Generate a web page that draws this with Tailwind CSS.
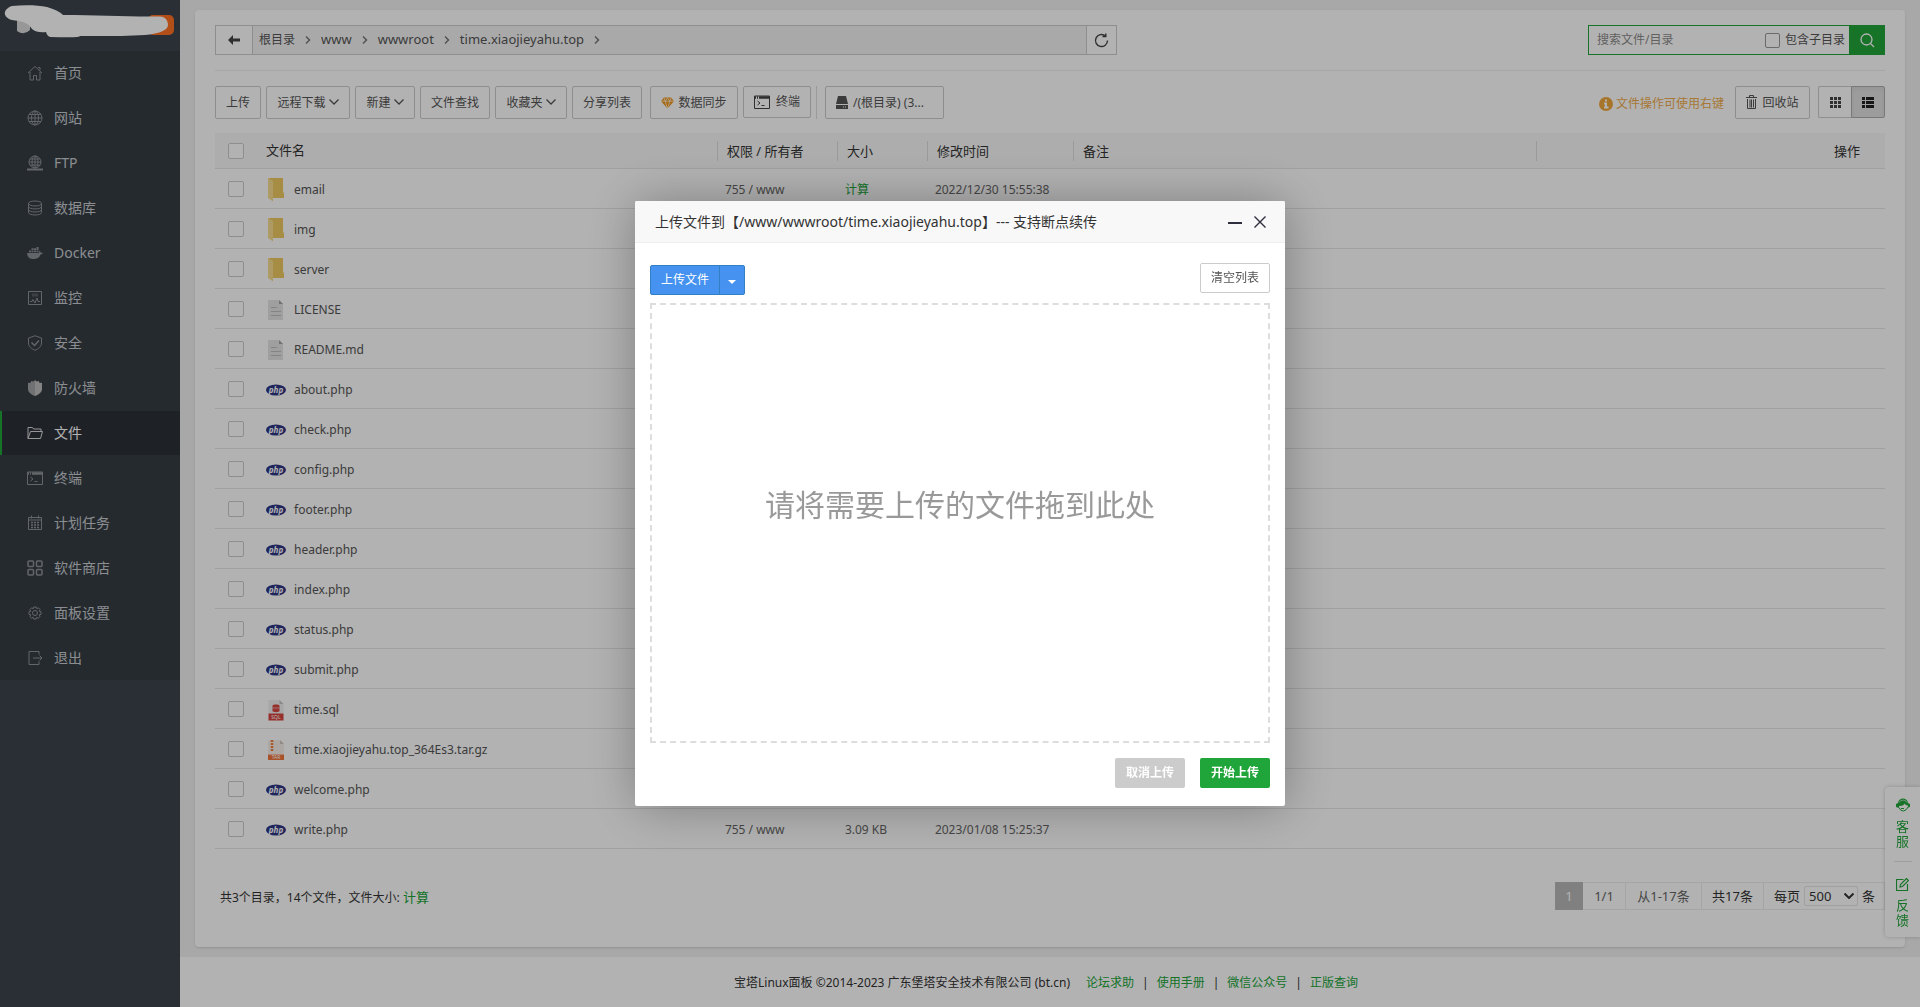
<!DOCTYPE html>
<html lang="zh-CN">
<head>
<meta charset="utf-8">
<title>宝塔Linux面板</title>
<script src="https://cdn.jsdelivr.net/npm/@tailwindcss/browser@4"></script>
</head>
<body class="min-h-screen bg-[#f1f1f1] font-['Noto_Sans','Noto_Sans_CJK_SC',sans-serif] text-xs text-[#333]">
<svg class="hidden" aria-hidden="true">
  <symbol id="i-home" viewBox="0 0 16 16"><path d="M1 8 8 1.500 15 8M3 7v8h3.500v-4.500h3V15H13V7M11 2.500h2V5"/></symbol>
  <symbol id="i-globe" viewBox="0 0 16 16"><circle cx="8" cy="8" r="7"/><ellipse cx="8" cy="8" rx="3.500" ry="7"/><path d="M8 1v14M1 8h14M2 4.500h12M2 11.500h12"/></symbol>
  <symbol id="i-ftp" viewBox="0 0 16 16"><circle cx="8" cy="7" r="6"/><ellipse cx="8" cy="7" rx="3" ry="6"/><path d="M8 1v12M2 7h12M3 4h10M3 10h10"/><path d="M0 14.500h16M6 14.500h4" stroke-width="2"/></symbol>
  <symbol id="i-db" viewBox="0 0 16 16"><ellipse cx="8" cy="3.500" rx="6.500" ry="2.500"/><path d="M1.500 3.500v9c0 3.300 13 3.300 13 0v-9M1.500 6.500c0 3.300 13 3.300 13 0M1.500 9.500c0 3.300 13 3.300 13 0"/></symbol>
  <symbol id="i-docker" viewBox="0 0 16 16"><path fill="currentColor" stroke="none" d="M0 8h11.500c.8-.3 1-1 .7-2.500l1 .8.4 1.200L16 8c-.4 1-1.300 1.200-2.200 1.200C12.500 12.500 10 14 6.500 14 3 14 .3 12.500 0 8zM2 5.500h2v1.800H2zM4.500 5.500h2v1.800h-2zM7 5.500h2v1.800H7zM9.500 5.500h2v1.800h-2zM4.500 3.200h2V5h-2zM7 3.200h2V5H7zM9.500 2h2v3h-2z"/></symbol>
  <symbol id="i-monitor" viewBox="0 0 16 16"><path d="M1.500 1.500h13v13h-13zM3 11.500h2l1-2 2 3.500 2-5 1 3.500h2"/><path fill="currentColor" fill-opacity=".4" stroke="none" d="M5 3.500h6v3H5z"/></symbol>
  <symbol id="i-shield" viewBox="0 0 16 16"><path d="M8 .8 14.500 3v5c0 3.500-3 5.800-6.500 7.300C4.500 13.800 1.500 11.500 1.500 8V3z"/><path stroke-width="1.500" d="M4.500 7.500l3 3L12 5.500"/></symbol>
  <symbol id="i-wall" viewBox="0 0 16 16"><path fill="currentColor" stroke="none" d="M8 0 9.500 1.500 12 1v1.500L15 3v6c0 3-3 5.500-7 7z"/><path fill="currentColor" fill-opacity=".8" stroke="none" d="M8 0 6.500 1.500 4 1v1.500L1 3v6c0 3 3 5.500 7 7z"/></symbol>
  <symbol id="i-folder" viewBox="0 0 16 16"><path d="M1 13.500V2.500h4.500l1 1.500H14v2.500M1 13.500 3.500 6.500h12l-2 7z"/></symbol>
  <symbol id="i-term" viewBox="0 0 16 16"><path d="M.5 2h15v12.500H.5zM3.500 7l2.500 2-2.500 2M7.500 11.500h3"/><path d="M1 3.500h14" stroke-width="2.500" stroke-dasharray="1 1 1 1 11"/></symbol>
  <symbol id="i-cal" viewBox="0 0 16 16"><path d="M1.500 2.500h13v12h-13zM4.500 .5v3M11.500 .5v3M1.500 5h13"/><path d="M4 7.500h8M4 10h8M4 12.500h8" stroke-dasharray="2 1" stroke-width="1.500"/></symbol>
  <symbol id="i-apps" viewBox="0 0 16 16"><g stroke-width="1.500"><rect x="1" y="1" width="5.500" height="5.500" rx="1"/><rect x="9.500" y="1" width="5.500" height="5.500" rx="1"/><rect x="1" y="9.500" width="5.500" height="5.500" rx="1"/><rect x="9.500" y="9.500" width="5.500" height="5.500" rx="1"/></g></symbol>
  <symbol id="i-gear" viewBox="0 0 16 16"><circle cx="8" cy="8" r="2.500"/><path d="M6.800 1.500h2.400l.5 1.700 1.700-.9 1.700 1.700-.9 1.700 1.800.5v2.600l-1.800.5.9 1.700-1.700 1.700-1.700-.9-.5 1.800H6.800l-.5-1.800-1.700.9-1.700-1.700.9-1.700L2 8.800V6.200l1.800-.5-.9-1.700 1.700-1.700 1.700.9z" transform="translate(0 .5)"/></symbol>
  <symbol id="i-exit" viewBox="0 0 16 16"><path d="M12 4.500v-3H2v13h10v-3M6 8h9M12.500 5.500 15 8l-2.500 2.500"/></symbol>
  <symbol id="i-down" viewBox="0 0 10 6"><path d="M.5 .5 5 5 9.500 .5"/></symbol>
  <symbol id="i-right" viewBox="0 0 6 8"><path d="M1 .5 4.500 4 1 7.500" stroke-width="1.500"/></symbol>
  <symbol id="f-dir" viewBox="0 0 20 24"><path fill="#eecb60" d="M2 0h15v13l1 3v4H2z"/><path fill="#f8dd90" d="M2 0 7 3v20.500L2 20z"/></symbol>
  <symbol id="f-txt" viewBox="0 0 20 24"><path fill="#e4e4e4" d="M2 2h11l4 4v16H2z"/><path fill="#a3a3a3" d="M13 2l4 4h-4z"/><path stroke="#bdbdbd" d="M5 9.500h6M5 13.500h10M5 17.500h10"/></symbol>
  <symbol id="f-php" viewBox="0 0 20 24"><ellipse cx="10" cy="12" rx="10" ry="5.500" fill="#2e3585"/><text x="10" y="14.500" text-anchor="middle" font-size="8" font-style="italic" font-weight="700" fill="#fff">php</text></symbol>
  <symbol id="f-sql" viewBox="0 0 20 24"><path fill="#efefef" d="M2.500 2h11l4 4v10h-15z"/><path fill="#c4c4c4" d="M13.500 2l4 4h-4z"/><path fill="#d84540" d="M6.500 7.500c0-1.500 7-1.500 7 0v5.500c0 1.500-7 1.500-7 0zM2.500 15.500h15v7h-15z"/><path stroke="#efefef" stroke-width=".6" d="M6.500 10h7"/><text x="10" y="21" text-anchor="middle" font-size="5" fill="#fff">SQL</text></symbol>
  <symbol id="f-tar" viewBox="0 0 20 24"><path fill="#f6efe9" d="M2 2h12l4 4v10H2z"/><path fill="#cfc8c0" d="M14 2l4 4h-4z"/><path stroke="#f08040" stroke-width="2.500" stroke-dasharray="2 1" d="M6 2v11"/><path fill="#f2763c" d="M2 16.500h16v5.500H2z"/><text x="10" y="21" text-anchor="middle" font-size="5" fill="#fff">TAR</text></symbol>
</svg>

<div class="flex min-h-screen">
  <aside class="w-[180px] shrink-0 bg-[#3c444d]">
    <div class="h-[51px]">
      <svg class="block h-[51px] w-[180px]" viewBox="0 0 180 51" role="img" aria-label="logo">
        <rect x="148" y="15" width="26" height="20" rx="5" fill="#ff7124"/>
        <path fill="#d9d9d9" d="M17 20h13v10q-6 6-13 1z"/>
        <path stroke="#9cc9ea" stroke-width="2" d="M80 17h40"/>
        <path fill="#fff" d="M12 6C24 4.500 38 5 47 7q11 3 16 8c35 0 65 2 97 1.500 5 0 8 4 8 8.500 0 5-8 8-18 9.500-20 2-50 1.500-70 1.500q1 2-30 1-3-1-4-5-9 1-14-3C28 22 20 21 12 20 2 17 3 9 12 6z"/>
      </svg>
    </div>
    <nav id="menu" class="flex flex-col gap-px bg-[#353d44] text-sm text-[#c8cbd0]"></nav>
  </aside>

  <div class="flex min-w-0 grow flex-col">
    <main class="mx-[15px] mt-[10px] grow rounded bg-white px-5 pt-[15px] shadow-sm">
      <div class="flex h-[30px] items-stretch justify-between">
        <div class="flex w-[54%] border border-[#ccc] bg-[#f3f3f3] text-[#555]">
          <button class="flex w-[37px] items-center justify-center border-r border-[#ccc] bg-white" aria-label="返回">
            <svg class="h-[10px] w-3" viewBox="0 0 12 10"><path fill="#444" d="M5 0v3.500h7v3H5V10L0 5z"/></svg>
          </button>
          <div class="flex grow items-center gap-[10px] pl-[6px] text-[13px]">
            <a href="#" class="text-xs">根目录</a><svg class="h-2 w-[6px] fill-none stroke-[#777]"><use href="#i-right"/></svg>
            <a href="#">www</a><svg class="h-2 w-[6px] fill-none stroke-[#777]"><use href="#i-right"/></svg>
            <a href="#">wwwroot</a><svg class="h-2 w-[6px] fill-none stroke-[#777]"><use href="#i-right"/></svg>
            <a href="#">time.xiaojieyahu.top</a><svg class="h-2 w-[6px] fill-none stroke-[#777]"><use href="#i-right"/></svg>
          </div>
          <button class="flex w-[30px] items-center justify-center border-l border-[#ccc] bg-white" aria-label="刷新">
            <svg class="h-[15px] w-[15px]" viewBox="0 0 15 15" fill="none" stroke="#444" stroke-width="1.400"><path d="M13.500 7.500a6 6 0 1 1-2.200-4.600M11.800 .5v3h-3.300"/></svg>
          </button>
        </div>
        <form class="flex w-[297px]">
          <div class="flex min-w-0 grow items-center border border-r-0 border-[#20a53a] pr-1">
            <input type="text" aria-label="搜索文件/目录" placeholder="搜索文件/目录" class="min-w-0 grow pl-2 text-xs outline-none placeholder:text-[#8c8c8c]">
            <label class="flex shrink-0 items-center gap-[5px] whitespace-nowrap text-[#555]"><input type="checkbox" class="h-[15px] w-[15px] appearance-none rounded-xs border border-[#999]">包含子目录</label>
          </div>
          <button type="button" class="flex w-9 shrink-0 items-center justify-center bg-[#20a53a]" aria-label="搜索">
            <svg class="h-[15px] w-[15px]" viewBox="0 0 15 15" fill="none" stroke="#fff" stroke-width="1.300"><circle cx="6.500" cy="6.500" r="5.500"/><path d="M10.500 10.500 14 14"/></svg>
          </button>
        </form>
      </div>

      <div class="mt-[15px] flex h-[49px] items-end justify-between border-t border-[#eee]">
        <div class="flex h-[33px] text-[#555]">
          <button class="w-[46px] rounded-xs border border-[#ccc]">上传</button>
          <button class="ml-[5px] flex w-[84px] items-center justify-center gap-[3px] rounded-xs border border-[#ccc]">远程下载<svg class="mb-[2px] h-[6px] w-[10px] fill-none stroke-[#555] stroke-[1.3]"><use href="#i-down"/></svg></button>
          <button class="ml-[5px] flex w-[60px] items-center justify-center gap-[3px] rounded-xs border border-[#ccc]">新建<svg class="mb-[2px] h-[6px] w-[10px] fill-none stroke-[#555] stroke-[1.3]"><use href="#i-down"/></svg></button>
          <button class="ml-[5px] w-[70px] rounded-xs border border-[#ccc]">文件查找</button>
          <button class="ml-[5px] flex w-[72px] items-center justify-center gap-[3px] rounded-xs border border-[#ccc]">收藏夹<svg class="mb-[2px] h-[6px] w-[10px] fill-none stroke-[#555] stroke-[1.3]"><use href="#i-down"/></svg></button>
          <button class="ml-[5px] w-[70px] rounded-xs border border-[#ccc]">分享列表</button>
          <button class="ml-2 flex w-[88px] items-center justify-center gap-1 rounded-xs border border-[#ccc]"><svg class="h-3 w-[13px]" viewBox="0 0 14 12"><path fill="#f0981e" d="M3 0h8l3 4-7 8-7-8z"/><path fill="none" stroke="#fff" stroke-width=".7" d="M0 4h14M4.500 4 7 12 9.500 4M3 0l1.500 4L7 .5 9.500 4 11 0"/></svg>数据同步</button>
          <button class="ml-[5px] flex h-8 w-[68px] items-center justify-center gap-[6px] rounded-xs border border-[#ccc]"><svg class="h-4 w-4 fill-none stroke-[#444]"><use href="#i-term"/></svg>终端</button>
          <span class="ml-[5px] w-px bg-[#ddd]"></span>
          <button class="ml-2 flex w-[119px] items-center gap-[5px] rounded-xs border border-[#ccc] pl-[10px]"><svg class="h-[13px] w-3" viewBox="0 0 12 13"><path fill="#555" d="M2 0h8l2 8H0zM0 9h12v4H0z"/><path stroke="#fff" d="M7 11h1M9 11h1"/></svg>/(根目录) (3...</button>
        </div>
        <div class="flex h-[33px] items-start">
          <p class="flex h-9 items-center gap-[3px] text-[#f0ad4e]"><svg class="h-[14px] w-[14px]" viewBox="0 0 14 14"><circle cx="7" cy="7" r="7" fill="#f0a83c"/><path fill="none" stroke="#fff" stroke-width="2" d="M7 2.500v2M5 6.500h2v4M5 10.500h4.500"/></svg>文件操作可使用右键</p>
          <button class="ml-[11px] flex h-[33px] w-[75px] items-center justify-center gap-[5px] rounded-xs border border-[#ccc] text-[#555]"><svg class="mb-[2px] h-[14px] w-[11px]" viewBox="0 0 11 14" fill="none" stroke="#555"><path d="M0 2.500h11M3.500 2.500v-2h4v2M1.500 4v9.500h8V4M4 4.500v8M5.500 4.500v8M7.500 4.500v8"/></svg>回收站</button>
          <div class="ml-2 flex h-8 w-[67px]">
            <button class="flex grow items-center justify-center rounded-l-xs border border-r-0 border-[#ccc]" aria-label="图标视图"><svg class="h-[11px] w-[11px]" viewBox="0 0 11 11"><path fill="#444" d="M0 0h3v3H0zM4 0h3v3H4zM8 0h3v3H8zM0 4h3v3H0zM4 4h3v3H4zM8 4h3v3H8zM0 8h3v3H0zM4 8h3v3H4zM8 8h3v3H8z"/></svg></button>
            <button class="flex w-[34px] items-center justify-center rounded-r-xs border border-[#adadad] bg-[#e0e0e0] inset-shadow-sm" aria-label="列表视图"><svg class="h-[11px] w-3" viewBox="0 0 12 11"><path fill="#222" d="M0 0h3v3H0zM4 0h8v3H4zM0 4h3v3H0zM4 4h8v3H4zM0 8h3v3H0zM4 8h8v3H4z"/></svg></button>
          </div>
        </div>
      </div>

      <table class="mt-[14px] w-full table-fixed border-separate border-spacing-0 text-left">
        <thead class="bg-[#f8f8f8] text-[13px] text-[#333]">
          <tr class="h-9">
            <th class="w-[51px] border-b border-[#e6e6e6] pl-[13px] font-normal"><input type="checkbox" aria-label="全选" class="block h-4 w-4 appearance-none rounded-xs border border-[#ccc] bg-white"></th>
            <th class="w-[27%] border-b border-[#e6e6e6] font-normal">文件名</th>
            <th class="w-[120px] border-b border-[#e6e6e6] font-normal"><div class="border-l border-[#ddd] pl-[9px] leading-5">权限 / 所有者</div></th>
            <th class="w-[90px] border-b border-[#e6e6e6] font-normal"><div class="border-l border-[#ddd] pl-[9px] leading-5">大小</div></th>
            <th class="w-[146px] border-b border-[#e6e6e6] font-normal"><div class="border-l border-[#ddd] pl-[9px] leading-5">修改时间</div></th>
            <th class="border-b border-[#e6e6e6] font-normal"><div class="border-l border-[#ddd] pl-[9px] leading-5">备注</div></th>
            <th class="w-[349px] border-b border-[#e6e6e6] text-right font-normal"><div class="border-l border-[#ddd] pr-[25px] leading-5">操作</div></th>
          </tr>
        </thead>
        <tbody id="files" class="text-[#666]"></tbody>
      </table>

      <div class="mt-[33px] flex items-center justify-between pb-[37px]">
        <p class="pt-[3px] pl-[5px]">共3个目录，14个文件，文件大小: <a href="#" class="text-[13px] text-[#20a53a]">计算</a></p>
        <div class="flex h-7 items-stretch text-[13px] leading-[26px]">
          <span class="w-7 bg-[#b8b8b8] text-center leading-7 text-white">1</span>
          <span class="w-[43px] border border-l-0 border-[#ececec] text-center text-[#666]">1/1</span>
          <span class="w-[76px] border border-l-0 border-[#ececec] text-center text-[#666]">从1-17条</span>
          <span class="w-[62px] border border-l-0 border-[#ececec] text-center">共17条</span>
          <label class="flex w-[121px] items-center gap-1 border border-l-0 border-[#ececec] pl-[10px]">每页
            <span class="grid items-center">
              <select class="col-start-1 row-start-1 h-5 w-[54px] appearance-none rounded-xs border border-[#e6e6e6] pl-1 leading-4"><option>500</option></select>
              <svg class="pointer-events-none col-start-1 row-start-1 mr-1 h-[6px] w-[10px] justify-self-end fill-none stroke-[#333] stroke-2"><use href="#i-down"/></svg>
            </span>条</label>
        </div>
      </div>
    </main>
    <footer class="mt-[10px] flex h-[50px] items-center justify-center bg-white pt-[2px] pr-2">
      <span>宝塔Linux面板 ©2014-2023 广东堡塔安全技术有限公司 (bt.cn)</span>
      <a href="#" class="ml-4 text-[#20a53a]">论坛求助</a><span class="mx-2">|</span>
      <a href="#" class="text-[#20a53a]">使用手册</a><span class="mx-2">|</span>
      <a href="#" class="text-[#20a53a]">微信公众号</a><span class="mx-2">|</span>
      <a href="#" class="text-[#20a53a]">正版查询</a>
    </footer>
  </div>
</div>

<aside class="fixed right-0 bottom-[70px] flex h-[150px] w-[35px] flex-col items-center rounded-l bg-white pt-[11px] text-[13px] leading-[15px] text-[#20a53a] shadow-[0_0_4px_rgba(0,0,0,0.2)]">
  <a href="#" class="flex h-[64px] w-[18px] flex-col items-center gap-[7px] border-b border-[#e4e4e4] text-center">
    <svg class="h-[14px] w-[14px] shrink-0" viewBox="0 0 14 14"><path fill="#20a53a" d="M2 5C2.500-1 11.500-1 12 5l2 1v3l-2 .5V7.500L9.500 7 9 5.500Q6.500 8.500 3 8v2L0 9V6z"/><path fill="none" stroke="#fff" stroke-width=".6" d="M2.800 4.500q4.200-5 8.400 0"/><path fill="none" stroke="#20a53a" d="M3 9.500q1 3.500 4.500 3.500 3-.5 4.500-4M5 10.500h3"/></svg>
    <span class="w-[13px]">客服</span>
  </a>
  <a href="#" class="flex w-[18px] flex-col items-center gap-[7px] pt-4 text-center">
    <svg class="h-[13px] w-[13px] shrink-0" viewBox="0 0 13 13" fill="none" stroke="#20a53a" stroke-width="1.200"><path d="M7.500 1.500h-7v11h11V6M4 9l.5-2.500L10.500 .5l2 2-6 6z"/></svg>
    <span class="w-[13px]">反馈</span>
  </a>
</aside>

<div class="fixed inset-0 flex items-center justify-center bg-black/30">
  <section role="dialog" aria-labelledby="dlg-title" class="flex h-[605px] w-[650px] flex-col rounded-xs bg-white shadow-[1px_1px_50px_rgba(0,0,0,0.3)]">
    <header class="flex h-[42px] items-center justify-between rounded-t-xs border-b border-[#eee] bg-[#f8f8f8] pr-[19px] pl-5">
      <h2 id="dlg-title" class="text-sm">上传文件到【/www/wwwroot/time.xiaojieyahu.top】--- 支持断点续传</h2>
      <div class="flex items-center gap-3">
        <button aria-label="最小化"><svg class="block h-3 w-[14px]" viewBox="0 0 14 12"><path fill="#2e2d3c" d="M0 6h14v2H0z"/></svg></button>
        <button aria-label="关闭"><svg class="block h-3 w-3" viewBox="0 0 12 12"><path stroke="#2e2d3c" stroke-width="1.400" d="M.5 .5l11 11M11.500 .5l-11 11"/></svg></button>
      </div>
    </header>
    <div class="flex grow flex-col px-[15px] pt-[20px] pb-[18px]">
      <div class="flex h-8 items-start justify-between">
        <div class="mt-[2px] flex h-[30px] text-white">
          <button class="w-[70px] rounded-l-xs border border-[#337fc4] bg-[#4592f0]">上传文件</button>
          <button class="-ml-px flex w-[26px] items-center justify-center rounded-r-xs border border-[#337fc4] bg-[#4592f0]" aria-label="更多"><svg class="mt-[3px] h-1 w-2" viewBox="0 0 8 4"><path fill="#fff" d="M0 0h8L4 4z"/></svg></button>
        </div>
        <button class="h-[30px] w-[70px] rounded-xs border border-[#ccc] text-[#555]">清空列表</button>
      </div>
      <div class="mt-2 flex grow items-center justify-center border-2 border-dashed border-[#ddd] pb-9 text-3xl text-[#999]">请将需要上传的文件拖到此处</div>
      <div class="mt-[15px] flex h-[30px] justify-end gap-[15px] font-bold text-white">
        <button class="w-[70px] rounded-xs bg-[#ccc]">取消上传</button>
        <button class="w-[70px] rounded-xs bg-[#20a53a]">开始上传</button>
      </div>
    </div>
  </section>
</div>

<script>
const menu = [['home','首页'],['globe','网站'],['ftp','FTP'],['db','数据库'],['docker','Docker'],['monitor','监控'],['shield','安全'],['wall','防火墙'],['folder','文件'],['term','终端'],['cal','计划任务'],['apps','软件商店'],['gear','面板设置'],['exit','退出']];
document.getElementById('menu').innerHTML = menu.map(([icon, label]) => {
  const state = icon === 'folder' ? 'border-[#20a53a] bg-[#2c3138] text-white' : 'border-transparent';
  const tone = icon === 'folder' ? 'text-[#d8d8d8]' : icon === 'wall' ? 'text-[#bdbdbd]' : 'text-[#8f9296]';
  return `<a href="#" class="flex h-11 items-center gap-[11px] border-l-2 pl-[25px] ${state}"><svg class="h-4 w-4 fill-none stroke-current ${tone}"><use href="#i-${icon}"/></svg>${label}</a>`;
}).join('');

const files = [
  ['dir','email','755 / www','计算','2022/12/30 15:55:38'],['dir','img'],['dir','server'],['txt','LICENSE'],['txt','README.md'],
  ['php','about.php'],['php','check.php'],['php','config.php'],['php','footer.php'],['php','header.php'],['php','index.php'],
  ['php','status.php'],['php','submit.php'],['sql','time.sql'],['tar','time.xiaojieyahu.top_364Es3.tar.gz'],['php','welcome.php'],
  ['php','write.php','755 / www','3.09 KB','2023/01/08 15:25:37']
];
document.getElementById('files').innerHTML = files.map(([type, name, perm = '', size = '', time = '']) => `
  <tr class="h-10">
    <td class="border-b border-[#e6e6e6] pl-[13px]"><input type="checkbox" aria-label="${name}" class="block h-4 w-4 appearance-none rounded-xs border border-[#ccc]"></td>
    <td class="border-b border-[#e6e6e6] pt-[2px]"><a href="#" class="flex items-center gap-2 text-[#555]"><svg class="h-6 w-5"><use href="#f-${type}"/></svg>${name}</a></td>
    <td class="border-b border-[#e6e6e6] pt-[2px] pl-2">${perm}</td>
    <td class="border-b border-[#e6e6e6] pt-[2px] pl-2">${size === '计算' ? '<a href="#" class="text-[#20a53a]">计算</a>' : size}</td>
    <td class="border-b border-[#e6e6e6] pt-[2px] pl-2">${time}</td>
    <td class="border-b border-[#e6e6e6]"></td>
    <td class="border-b border-[#e6e6e6]"></td>
  </tr>`).join('');
</script>
</body>
</html>
